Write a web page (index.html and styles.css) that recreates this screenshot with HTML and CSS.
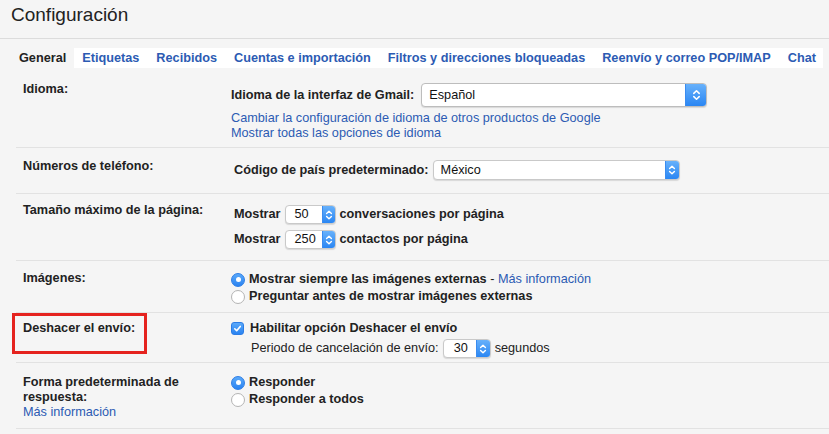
FILE: index.html
```html
<!DOCTYPE html>
<html lang="es">
<head>
<meta charset="utf-8">
<title>Configuración</title>
<link rel="stylesheet" href="styles.css">
</head>
<body>
<div class="page">
  <header class="header">
    <h1 class="title">Configuración</h1>
  </header>

  <nav class="tabs">
    <span class="tab tab-active">General</span>
    <div class="tab-strip">
      <a class="tab">Etiquetas</a>
      <a class="tab">Recibidos</a>
      <a class="tab">Cuentas e importación</a>
      <a class="tab">Filtros y direcciones bloqueadas</a>
      <a class="tab">Reenvío y correo POP/IMAP</a>
      <a class="tab">Chat</a>
    </div>
  </nav>

  <div class="settings">
    <div class="row row-idioma">
      <div class="label">Idioma:</div>
      <div class="value">
        <div class="line line-select gap-lg">
          <b>Idioma de la interfaz de Gmail:</b>
          <span class="select select-es">
            <span class="select-text">Español</span>
            <span class="select-btn"><svg viewBox="0 0 8 12"><path d="M1.6 4.6 L4 2.2 L6.4 4.6 M1.6 7.4 L4 9.8 L6.4 7.4"/></svg></span>
          </span>
        </div>
        <div class="links">
          <a class="link">Cambiar la configuración de idioma de otros productos de Google</a>
          <a class="link">Mostrar todas las opciones de idioma</a>
        </div>
      </div>
    </div>

    <div class="row row-tel">
      <div class="label">Números de teléfono:</div>
      <div class="value">
        <div class="line line-select">
          <b>Código de país predeterminado:</b>
          <span class="select select-mx">
            <span class="select-text">México</span>
            <span class="select-btn"><svg viewBox="0 0 8 12"><path d="M1.6 4.6 L4 2.2 L6.4 4.6 M1.6 7.4 L4 9.8 L6.4 7.4"/></svg></span>
          </span>
        </div>
      </div>
    </div>

    <div class="row row-size">
      <div class="label">Tamaño máximo de la página:</div>
      <div class="value stack-6">
        <div class="line line-select">
          <b>Mostrar</b>
          <span class="select select-num">
            <span class="select-text">50</span>
            <span class="select-btn"><svg viewBox="0 0 8 12"><path d="M1.6 4.6 L4 2.2 L6.4 4.6 M1.6 7.4 L4 9.8 L6.4 7.4"/></svg></span>
          </span>
          <b>conversaciones por página</b>
        </div>
        <div class="line line-select">
          <b>Mostrar</b>
          <span class="select select-num">
            <span class="select-text">250</span>
            <span class="select-btn"><svg viewBox="0 0 8 12"><path d="M1.6 4.6 L4 2.2 L6.4 4.6 M1.6 7.4 L4 9.8 L6.4 7.4"/></svg></span>
          </span>
          <b>contactos por página</b>
        </div>
      </div>
    </div>

    <div class="row row-img">
      <div class="label">Imágenes:</div>
      <div class="value">
        <label class="option">
          <span class="radio radio-on"></span>
          <span><b>Mostrar siempre las imágenes externas</b> - <a class="link">Más información</a></span>
        </label>
        <label class="option">
          <span class="radio"></span>
          <b>Preguntar antes de mostrar imágenes externas</b>
        </label>
      </div>
    </div>

    <div class="row row-undo">
      <div class="label">Deshacer el envío:</div>
      <span class="highlight"></span>
      <div class="value">
        <label class="option option-check">
          <span class="checkbox"><svg viewBox="0 0 12 12"><path d="M3 6.3 L5.1 8.4 L9 3.8"/></svg></span>
          <b>Habilitar opción Deshacer el envío</b>
        </label>
        <div class="line line-select indent">
          <span>Periodo de cancelación de envío:</span>
          <span class="select select-sec">
            <span class="select-text">30</span>
            <span class="select-btn"><svg viewBox="0 0 8 12"><path d="M1.6 4.6 L4 2.2 L6.4 4.6 M1.6 7.4 L4 9.8 L6.4 7.4"/></svg></span>
          </span>
          <span>segundos</span>
        </div>
      </div>
    </div>

    <div class="row row-reply">
      <div class="label">
        Forma predeterminada de respuesta:
        <a class="link link-block">Más información</a>
      </div>
      <div class="value">
        <label class="option">
          <span class="radio radio-on"></span>
          <b>Responder</b>
        </label>
        <label class="option">
          <span class="radio"></span>
          <b>Responder a todos</b>
        </label>
      </div>
    </div>
  </div>
</div>
</body>
</html>
```

FILE: styles.css
```css
* { box-sizing: border-box; }

html, body {
  margin: 0;
  padding: 0;
  background: #f5f5f5;
}

body {
  font-family: "Liberation Sans", Arial, Helvetica, sans-serif;
  font-size: 12.7px;
  color: #222;
  width: 829px;
  height: 434px;
  overflow: hidden;
}

b { font-weight: bold; }

.header {
  height: 39px;
  border-bottom: 1px solid #dcdcdc;
  padding: 3px 0 0 11px;
}

.title {
  margin: 0;
  font-size: 19px;
  font-weight: normal;
  line-height: 23px;
  color: #222;
}

.tabs {
  display: flex;
  margin-top: 9px;
  padding-left: 11px;
  height: 20px;
}

.tab {
  display: flex;
  align-items: center;
  padding: 0 8px;
  font-weight: bold;
  color: #2c5bb3;
  white-space: nowrap;
  line-height: 20px;
}

.tab-active { color: #222; }

.tab-strip {
  display: flex;
  gap: 1px;
  background: #fff;
  width: 749px;
}

.settings {
  margin-left: 16px;
}

.row {
  position: relative;
  display: flex;
  align-items: flex-start;
  border-bottom: 1px solid #e2e2e2;
}

.label {
  width: 215px;
  flex: none;
  padding: 0 24px 0 7px;
  font-weight: bold;
  line-height: 15px;
}

.value {
  display: flex;
  flex-direction: column;
  line-height: 15px;
}

.line {
  display: flex;
  align-items: center;
  gap: 4px;
  white-space: nowrap;
}

.gap-lg { gap: 7px; }

.stack-6 { gap: 6px; }

.links {
  display: flex;
  flex-direction: column;
  margin-top: 4px;
}

.link {
  color: #2c5bb3;
  font-weight: normal;
  text-decoration: none;
}

.link-block { display: block; }

.select {
  display: inline-flex;
  align-items: stretch;
  background: #fff;
  border: 1px solid #c9c9c9;
  border-radius: 4px;
  box-shadow: 0 1px 1px rgba(0,0,0,0.12);
  overflow: hidden;
  font-weight: normal;
}

.select-text {
  flex: 1;
  display: flex;
  align-items: center;
  padding-left: 7px;
  color: #111;
}

.select-btn {
  flex: none;
  display: flex;
  align-items: center;
  justify-content: center;
  background: linear-gradient(#67b1fb, #2a86f3);
  border-left: 1px solid #3a8cf0;
}

.select-btn svg {
  width: 8px;
  height: 12px;
  fill: none;
  stroke: #fff;
  stroke-width: 1.4;
  stroke-linecap: round;
  stroke-linejoin: round;
}

.select-es { width: 286px; height: 24px; border-color: #bdbdbd; }
.select-es .select-btn { width: 21px; }
.select-es .select-btn svg { width: 9px; height: 14px; }

.select-mx { width: 247px; height: 20px; }
.select-mx .select-btn { width: 14px; }

.select-num { width: 51px; height: 19px; }
.select-num .select-btn { width: 13px; }

.select-sec { width: 48px; height: 19px; }
.select-sec .select-btn { width: 14px; }
.select-sec .select-text { padding-left: 10px; }
.select-num .select-text { padding-left: 9px; }

.option {
  display: flex;
  align-items: center;
  gap: 4px;
  height: 17px;
  white-space: nowrap;
}

.radio {
  flex: none;
  width: 14px;
  height: 14px;
  border-radius: 50%;
  background: #fff;
  border: 1px solid #b4b4b4;
  display: flex;
  align-items: center;
  justify-content: center;
}

.radio-on {
  background: linear-gradient(#5aa9fa, #2a83f1);
  border-color: #2c7de6;
}

.radio-on::after {
  content: "";
  width: 5px;
  height: 5px;
  border-radius: 50%;
  background: #fff;
}

.checkbox {
  flex: none;
  width: 13px;
  height: 13px;
  border-radius: 3px;
  background: linear-gradient(#5aa9fa, #2a83f1);
  border: 1px solid #2c7de6;
  display: flex;
  margin-right: 2px;
}

.checkbox svg {
  width: 11px;
  height: 11px;
  fill: none;
  stroke: #fff;
  stroke-width: 1.8;
  stroke-linecap: round;
  stroke-linejoin: round;
}

.indent { padding-left: 20px; margin-top: 2px; }

.highlight {
  position: absolute;
  left: -4px;
  top: 0;
  width: 135px;
  height: 41px;
  border: 3px solid #e5231f;
}

/* per-row vertical rhythm */
.row-idioma { height: 80px; }
.row-idioma .label { padding-top: 14px; }
.row-idioma .value { padding-top: 15px; }

.row-tel { height: 46px; }
.row-tel .label { padding-top: 11px; }
.row-tel .value { padding-top: 12px; padding-left: 3px; }

.row-size { height: 67px; }
.row-size .label { padding-top: 9px; }
.row-size .value { padding-top: 11px; padding-left: 3px; }

.row-img { height: 52px; }
.row-img .label { padding-top: 10px; }
.row-img .value { padding-top: 10px; }

.row-undo { height: 50px; }
.row-undo .label { padding-top: 8px; }
.row-undo .value { padding-top: 7px; }

.row-reply { height: 66px; }
.row-reply .label { padding-top: 12px; }
.row-reply .value { padding-top: 11px; }
```
